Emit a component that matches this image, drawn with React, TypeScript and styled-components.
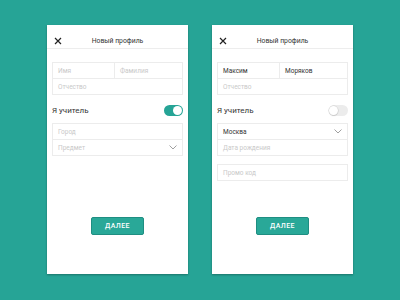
import styled, { createGlobalStyle } from "styled-components";

const TEAL = "#26a496";

const Global = createGlobalStyle`
  html, body {
    margin: 0;
    padding: 0;
    background: ${TEAL};
    font-family: Roboto, "Liberation Sans", Arial, sans-serif;
  }
`;

const Page = styled.div`
  width: 400px;
  height: 300px;
  display: flex;
  justify-content: center;
  align-items: flex-start;
  gap: 24px;
  padding-top: 25px;
  box-sizing: border-box;
`;

const Card = styled.div`
  width: 141px;
  height: 249px;
  background: #fff;
  box-shadow: 0 1px 2px rgba(0, 0, 0, 0.3);
  display: flex;
  flex-direction: column;
`;

const Header = styled.div`
  height: 24px;
  border-bottom: 1px solid #ededed;
  display: flex;
  align-items: flex-end;
  position: relative;
  padding: 0 0 3px 7px;
  box-sizing: border-box;
`;

const Title = styled.div`
  position: absolute;
  left: 0;
  right: 0;
  bottom: 3px;
  line-height: 8px;
  text-align: center;
  font-size: 6.8px;
  color: #333;
`;

const Body = styled.div`
  padding: 13px 5px 0;
  display: flex;
  flex-direction: column;
`;

const Group = styled.div<{ $mt?: number }>`
  border: 1px solid #ececec;
  margin-top: ${(p) => p.$mt ?? 0}px;
`;

const Row = styled.div<{ $cols?: boolean }>`
  height: 15px;
  display: ${(p) => (p.$cols ? "grid" : "flex")};
  grid-template-columns: 61px 1fr;
  align-items: center;
  & + & {
    border-top: 1px solid #ececec;
  }
`;

const Cell = styled.div<{ $filled?: boolean }>`
  height: 100%;
  flex: 1;
  display: flex;
  align-items: center;
  justify-content: space-between;
  padding: 0 5px;
  font-size: 6.5px;
  color: ${(p) => (p.$filled ? "#333" : "#c9c9c9")};
  & + & {
    border-left: 1px solid #ececec;
  }
`;

const TeacherRow = styled.div`
  margin-top: 9px;
  height: 12px;
  display: flex;
  align-items: center;
  justify-content: space-between;
  font-size: 8px;
  color: #333;
`;

const Track = styled.div<{ $on: boolean }>`
  width: 19px;
  height: 11px;
  border-radius: 6px;
  background: ${(p) => (p.$on ? TEAL : "#ececec")};
  position: relative;
`;

const Knob = styled.div<{ $on: boolean }>`
  position: absolute;
  top: 1px;
  left: ${(p) => (p.$on ? "9px" : "0px")};
  width: 9px;
  height: 9px;
  border-radius: 50%;
  background: #fff;
  box-shadow: ${(p) =>
    p.$on ? "none" : "0 0 0 0.5px #ccc, 0 1px 1px rgba(0,0,0,0.15)"};
`;

const Button = styled.button`
  margin: auto auto 39px;
  width: 53px;
  height: 18px;
  background: #29a898;
  border: 1px solid #1f8e82;
  border-radius: 2px;
  color: #fff;
  font-family: Roboto, "Liberation Sans", Arial, sans-serif;
  font-size: 7px;
  font-weight: 500;
  letter-spacing: 0.4px;
  padding: 0;
`;

const Close = () => (
  <svg width="8" height="8" viewBox="0 0 8 8">
    <path d="M1 1L7 7M7 1L1 7" stroke="#222" strokeWidth="1.2" />
  </svg>
);

const Chevron = () => (
  <svg width="8" height="5" viewBox="0 0 8 5">
    <path d="M0.5 0.5L4 4L7.5 0.5" stroke="#888" strokeWidth="0.8" fill="none" />
  </svg>
);

const Toggle = ({ on }: { on: boolean }) => (
  <Track $on={on}>
    <Knob $on={on} />
  </Track>
);

const Screen = ({ children }: { children: React.ReactNode }) => (
  <Card>
    <Header>
      <Close />
      <Title>Новый профиль</Title>
    </Header>
    <Body>{children}</Body>
    <Button>ДАЛЕЕ</Button>
  </Card>
);

export default function App() {
  return (
    <>
      <Global />
      <Page>
        <Screen>
          <Group>
            <Row $cols>
              <Cell>Имя</Cell>
              <Cell>Фамилия</Cell>
            </Row>
            <Row>
              <Cell>Отчество</Cell>
            </Row>
          </Group>
          <TeacherRow>
            Я учитель
            <Toggle on />
          </TeacherRow>
          <Group $mt={7}>
            <Row>
              <Cell>Город</Cell>
            </Row>
            <Row>
              <Cell>
                Предмет
                <Chevron />
              </Cell>
            </Row>
          </Group>
        </Screen>
        <Screen>
          <Group>
            <Row $cols>
              <Cell $filled>Максим</Cell>
              <Cell $filled>Моряков</Cell>
            </Row>
            <Row>
              <Cell>Отчество</Cell>
            </Row>
          </Group>
          <TeacherRow>
            Я учитель
            <Toggle on={false} />
          </TeacherRow>
          <Group $mt={7}>
            <Row>
              <Cell $filled>
                Москва
                <Chevron />
              </Cell>
            </Row>
            <Row>
              <Cell>Дата рождения</Cell>
            </Row>
          </Group>
          <Group $mt={8}>
            <Row>
              <Cell>Промо код</Cell>
            </Row>
          </Group>
        </Screen>
      </Page>
    </>
  );
}
